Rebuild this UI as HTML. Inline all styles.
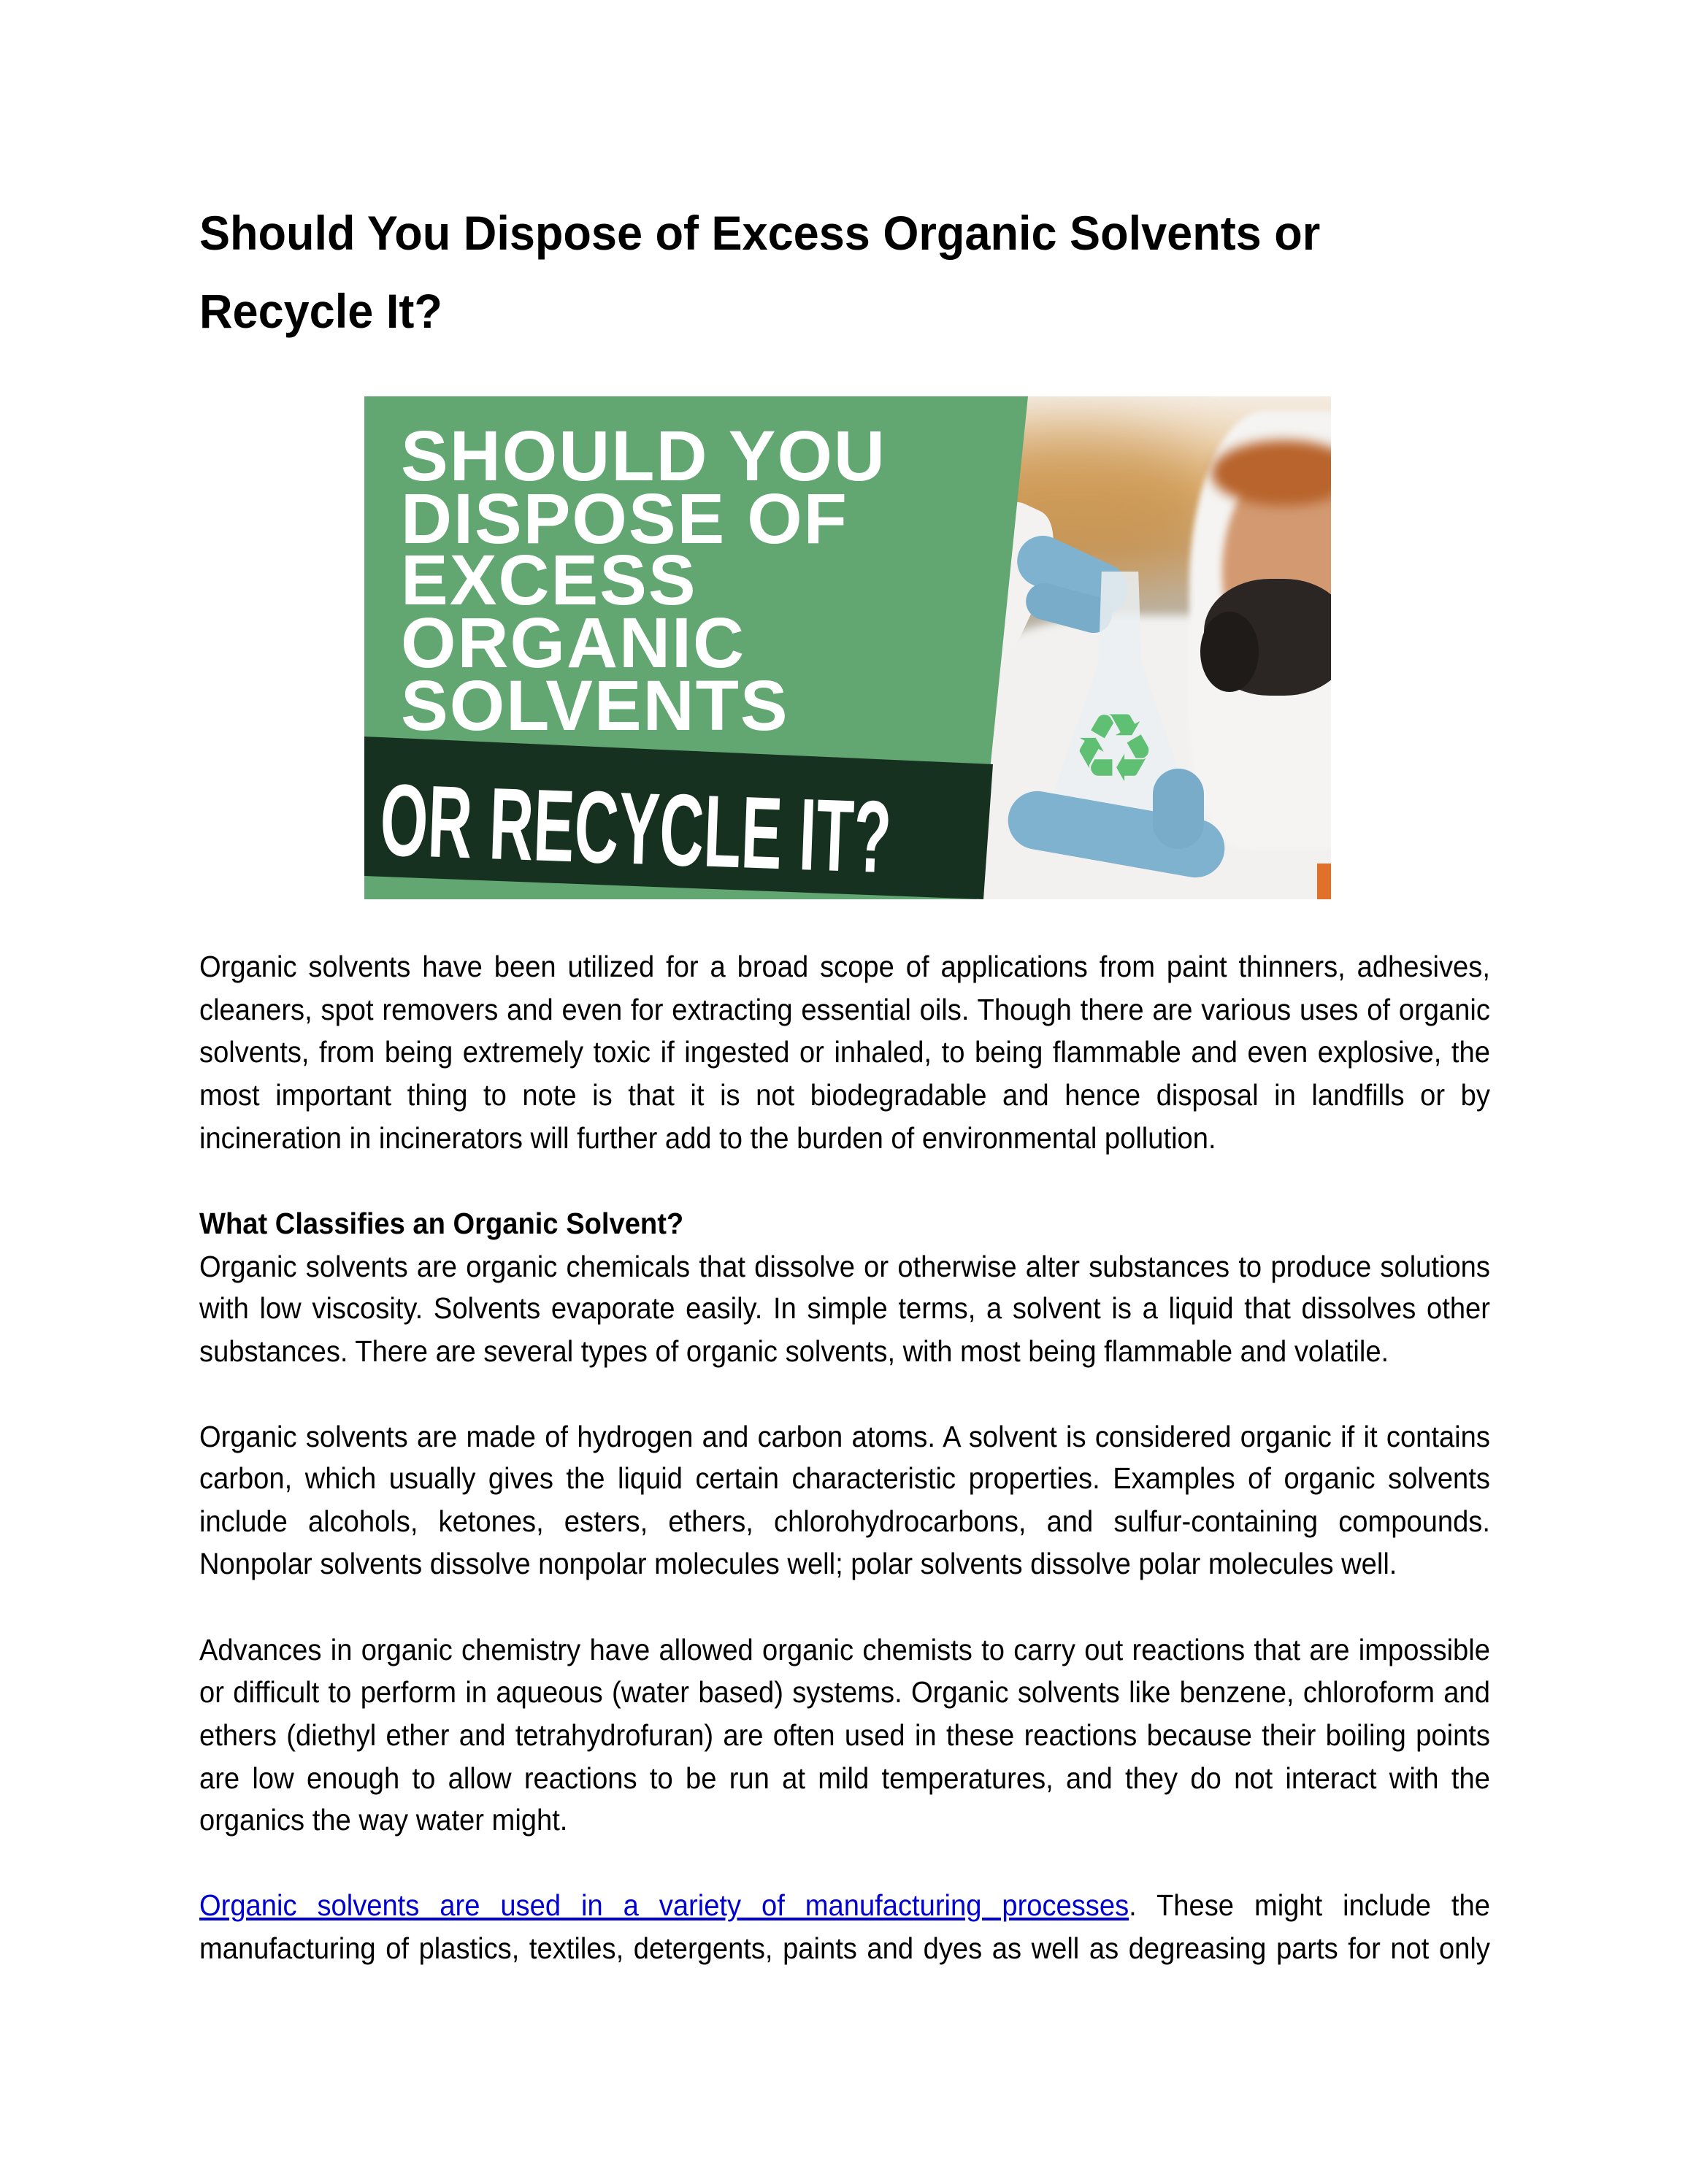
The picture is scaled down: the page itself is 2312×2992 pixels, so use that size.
<!DOCTYPE html>
<html><head><meta charset="utf-8">
<style>
html,body{margin:0;padding:0;background:#fff;}
body{width:2312px;height:2992px;position:relative;overflow:hidden;font-family:"Liberation Sans",sans-serif;color:#000;}
.t{position:absolute;left:273px;font-weight:bold;font-size:66px;line-height:80px;white-space:nowrap;transform:scaleX(0.955);transform-origin:left center;}
.l{position:absolute;left:273px;width:1901px;font-size:41px;line-height:58px;height:58px;white-space:nowrap;overflow:visible;text-align:justify;text-align-last:justify;transform:scaleX(0.93);transform-origin:left center;}
.l.e{text-align-last:left;}
.b{font-weight:bold;}
a{color:#0000d0;text-decoration:underline;}
#img{position:absolute;left:499px;top:543px;width:1324px;height:689px;overflow:hidden;background:#d9cfc0;}
.it{position:absolute;left:50px;color:#fff;font-weight:bold;font-size:97px;line-height:90px;letter-spacing:2px;white-space:nowrap;}
</style></head><body>
<div class="t" style="top:279px">Should You Dispose of Excess Organic Solvents or</div>
<div class="t" style="top:386px">Recycle It?</div>

<div id="img">
  <div style="position:absolute;left:780px;top:0;width:560px;height:689px;background:linear-gradient(180deg,#f4ece2 0%,#e7c08a 18%,#c9a77c 30%,#b9b4a8 45%,#cfcac2 70%,#e9e6e2 100%);"></div>
  <div style="position:absolute;left:760px;top:50px;width:420px;height:200px;border-radius:50%;background:#c58d45;filter:blur(40px);opacity:.7"></div>
  <div style="position:absolute;left:720px;top:300px;width:700px;height:500px;border-radius:45% 40% 0 0;background:#f2f1ef;filter:blur(6px)"></div>
  <div style="position:absolute;left:1130px;top:20px;width:260px;height:600px;border-radius:40% 0 0 30%;background:#f5f4f2;filter:blur(4px)"></div>
  <div style="position:absolute;left:1175px;top:90px;width:180px;height:300px;border-radius:50%;background:#d39a72;filter:blur(5px)"></div>
  <div style="position:absolute;left:1160px;top:60px;width:200px;height:90px;border-radius:50%;background:#b8642c;filter:blur(8px)"></div>
  <div style="position:absolute;left:1150px;top:250px;width:200px;height:160px;border-radius:45%;background:#2b2623;"></div>
  <div style="position:absolute;left:1145px;top:295px;width:80px;height:110px;border-radius:50%;background:#1f1b19;"></div>
  <div style="position:absolute;left:800px;top:140px;width:120px;height:260px;border-radius:40%;background:#f3f2f0;transform:rotate(25deg);"></div>
  <div style="position:absolute;left:890px;top:210px;width:160px;height:70px;border-radius:35px;background:#7fb2cf;transform:rotate(25deg);"></div>
  <div style="position:absolute;left:905px;top:265px;width:120px;height:50px;border-radius:25px;background:#78acc9;transform:rotate(15deg);"></div>
  <div style="position:absolute;left:930px;top:240px;width:210px;height:360px;background:rgba(235,240,242,.85);clip-path:polygon(38% 0,62% 0,64% 35%,100% 95%,0 95%,36% 35%);"></div>
  <div style="position:absolute;left:957px;top:412px;width:140px;color:#5fbf72;font-size:130px;line-height:140px;text-align:center;font-family:'DejaVu Sans',sans-serif;">♻</div>
  <div style="position:absolute;left:880px;top:560px;width:300px;height:80px;border-radius:40px;background:#7fb2cf;transform:rotate(10deg);"></div>
  <div style="position:absolute;left:1080px;top:510px;width:70px;height:110px;border-radius:35px;background:#78acc9;"></div>
  <div style="position:absolute;left:1305px;top:640px;width:20px;height:49px;background:#e0702a"></div>
  <div style="position:absolute;left:0;top:0;width:1324px;height:689px;background:#62a672;clip-path:polygon(0 0,909px 0,839px 689px,0 689px);"></div>
  <div style="position:absolute;left:0;top:0;width:1324px;height:689px;background:#16311f;clip-path:polygon(0 466px,861px 504px,848px 689px,0 657px);"></div>
  <div class="it" style="top:37px">SHOULD YOU</div>
  <div class="it" style="top:123px">DISPOSE OF</div>
  <div class="it" style="top:207px">EXCESS</div>
  <div class="it" style="top:293px">ORGANIC</div>
  <div class="it" style="top:379px">SOLVENTS</div>
  <div style="position:absolute;left:22px;top:505px;color:#fff;font-weight:bold;font-size:140px;line-height:150px;white-space:nowrap;transform:rotate(2deg) scaleX(0.6);transform-origin:left center;">OR RECYCLE IT?</div>
</div>

<div class="l" style="top:1295px">Organic solvents have been utilized for a broad scope of applications from paint thinners, adhesives,</div>
<div class="l" style="top:1354px">cleaners, spot removers and even for extracting essential oils. Though there are various uses of organic</div>
<div class="l" style="top:1412px">solvents, from being extremely toxic if ingested or inhaled, to being flammable and even explosive, the</div>
<div class="l" style="top:1471px">most important thing to note is that it is not biodegradable and hence disposal in landfills or by</div>
<div class="l e" style="top:1530px">incineration in incinerators will further add to the burden of environmental pollution.</div>

<div class="l e b" style="top:1647px">What Classifies an Organic Solvent?</div>
<div class="l" style="top:1706px">Organic solvents are organic chemicals that dissolve or otherwise alter substances to produce solutions</div>
<div class="l" style="top:1763px">with low viscosity. Solvents evaporate easily. In simple terms, a solvent is a liquid that dissolves other</div>
<div class="l e" style="top:1822px">substances. There are several types of organic solvents, with most being flammable and volatile.</div>

<div class="l" style="top:1939px">Organic solvents are made of hydrogen and carbon atoms. A solvent is considered organic if it contains</div>
<div class="l" style="top:1996px">carbon, which usually gives the liquid certain characteristic properties. Examples of organic solvents</div>
<div class="l" style="top:2055px">include alcohols, ketones, esters, ethers, chlorohydrocarbons, and sulfur-containing compounds.</div>
<div class="l e" style="top:2113px">Nonpolar solvents dissolve nonpolar molecules well; polar solvents dissolve polar molecules well.</div>

<div class="l" style="top:2231px">Advances in organic chemistry have allowed organic chemists to carry out reactions that are impossible</div>
<div class="l" style="top:2289px">or difficult to perform in aqueous (water based) systems. Organic solvents like benzene, chloroform and</div>
<div class="l" style="top:2348px">ethers (diethyl ether and tetrahydrofuran) are often used in these reactions because their boiling points</div>
<div class="l" style="top:2407px">are low enough to allow reactions to be run at mild temperatures, and they do not interact with the</div>
<div class="l e" style="top:2464px">organics the way water might.</div>

<div class="l" style="top:2581px"><a>Organic solvents are used in a variety of manufacturing processes</a>. These might include the</div>
<div class="l" style="top:2640px">manufacturing of plastics, textiles, detergents, paints and dyes as well as degreasing parts for not only</div>
</body></html>
